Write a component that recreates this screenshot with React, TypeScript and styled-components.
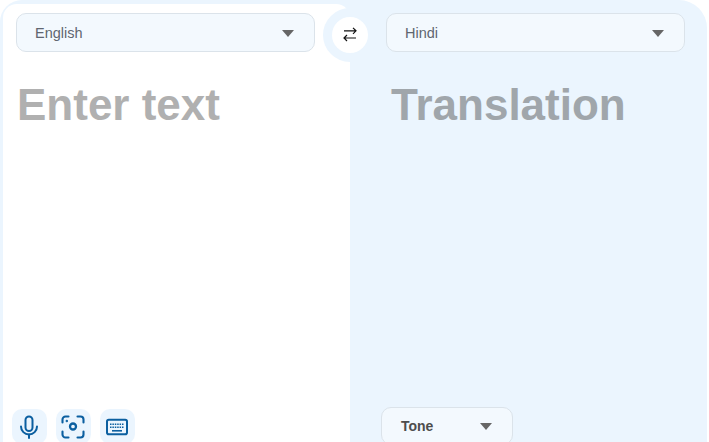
import React from "react";
import styled, { createGlobalStyle } from "styled-components";

const GlobalStyle = createGlobalStyle`
  html, body {
    margin: 0;
    padding: 0;
    background: #fff;
    overflow: hidden;
  }
`;

const Card = styled.div`
  position: relative;
  display: grid;
  grid-template-columns: 347px 357px;
  width: 707px;
  height: 442px;
  padding: 4px 0 0 3px;
  box-sizing: border-box;
  overflow: hidden;
  background: #ebf5fe;
  border-radius: 22px 28px 0 0;
  font-family: "Liberation Sans", Arial, sans-serif;
`;

const Panel = styled.section<{ $source?: boolean }>`
  display: flex;
  flex-direction: column;
  height: 438px;
  box-sizing: border-box;
  padding: ${({ $source }) => ($source ? "9px 35px 0 13px" : "9px 22px 0 36px")};
  background: ${({ $source }) => ($source ? "#fff" : "transparent")};
  border-radius: ${({ $source }) => ($source ? "14px 14px 0 0" : "0")};
`;

const Select = styled.div`
  display: flex;
  align-items: center;
  justify-content: space-between;
  box-sizing: border-box;
  height: 39px;
  padding: 0 20px 0 18px;
  border: 1px solid #dbe3ea;
  border-radius: 10px;
  background: #f3f9fe;
  color: #5f6670;
  font-size: 14.5px;
`;

const Caret = styled.span`
  width: 0;
  height: 0;
  margin-top: 1px;
  border-left: 6px solid transparent;
  border-right: 6px solid transparent;
  border-top: 7px solid #666;
`;

const BigText = styled.div<{ $inset: number; $color: string }>`
  margin: 27px 0 0 ${({ $inset }) => $inset}px;
  font-weight: 700;
  font-size: 44px;
  line-height: 52px;
  white-space: nowrap;
  color: ${({ $color }) => $color};
`;

const Footer = styled.div`
  display: flex;
  gap: 9px;
  margin-top: auto;
  margin-left: -4px;
  height: 33px;
`;

const IconButton = styled.button`
  display: flex;
  align-items: center;
  justify-content: center;
  flex: none;
  width: 35px;
  height: 35px;
  padding: 0 1px 0 0;
  border: 0;
  border-radius: 10px;
  background: #ebf5fe;
  color: #0b5fa0;
`;

const ToneSelect = styled(Select)`
  flex: none;
  width: 132px;
  height: 38px;
  margin-top: auto;
  margin-left: -5px;
  margin-bottom: -3px;
  padding: 0 20px 0 19px;
  font-size: 14px;
  font-weight: 700;
  color: #4d4d4d;
`;

const SwapRing = styled.div`
  position: absolute;
  left: 323px;
  top: 8px;
  display: flex;
  align-items: center;
  justify-content: center;
  width: 54px;
  height: 54px;
  box-sizing: border-box;
  border: 9px solid #ebf5fe;
  border-radius: 50%;
  background: #fff;
`;

export default function App() {
  return (
    <Card>
      <GlobalStyle />
      <Panel $source>
        <Select>
          English
          <Caret />
        </Select>
        <BigText $inset={1} $color="#b0b0b0">Enter text</BigText>
        <Footer>
          <IconButton aria-label="Voice">
            <svg width="24" height="24" viewBox="0 0 24 24" fill="none" stroke="currentColor" strokeWidth="2" strokeLinecap="round">
              <rect x="8.5" y="1.5" width="7" height="14.5" rx="3.5" />
              <path d="M4 11.5a8 8 0 0 0 16 0" />
              <path d="M12 19.5v3.5" />
            </svg>
          </IconButton>
          <IconButton aria-label="Camera">
            <svg width="24" height="24" viewBox="0 0 24 24" fill="none" stroke="currentColor" strokeWidth="2.1" strokeLinecap="round">
              <path d="M1.5 7.5V4.5a3 3 0 0 1 3-3h3M16.5 1.5h3a3 3 0 0 1 3 3v3M22.5 16.5v3a3 3 0 0 1-3 3h-3M7.5 22.5h-3a3 3 0 0 1-3-3v-3" />
              <circle cx="12" cy="11.5" r="3" strokeWidth="2.3" />
              <circle cx="5.8" cy="6" r="0.5" strokeWidth="1.4" />
            </svg>
          </IconButton>
          <IconButton aria-label="Keyboard">
            <svg width="24" height="24" viewBox="0 0 24 24" fill="none" stroke="currentColor">
              <rect x="2" y="4.8" width="20" height="14.4" rx="1.8" strokeWidth="2" />
              <path d="M5 9.2h14M5 12.2h14" strokeWidth="1.6" strokeDasharray="1.5 0.9" />
              <path d="M7 15.8h10" strokeWidth="1.6" />
            </svg>
          </IconButton>
        </Footer>
      </Panel>
      <Panel>
        <Select>
          Hindi
          <Caret />
        </Select>
        <BigText $inset={5} $color="#a0a6ab">Translation</BigText>
        <ToneSelect>
          Tone
          <Caret />
        </ToneSelect>
      </Panel>
      <SwapRing>
        <svg width="16" height="16" viewBox="0 0 16 16" fill="none" stroke="#111" strokeWidth="1.2">
          <path d="M2 3.8h12M11 0.8l3 3-3 3" />
          <path d="M14 11H2M5 8l-3 3 3 3" />
        </svg>
      </SwapRing>
    </Card>
  );
}
